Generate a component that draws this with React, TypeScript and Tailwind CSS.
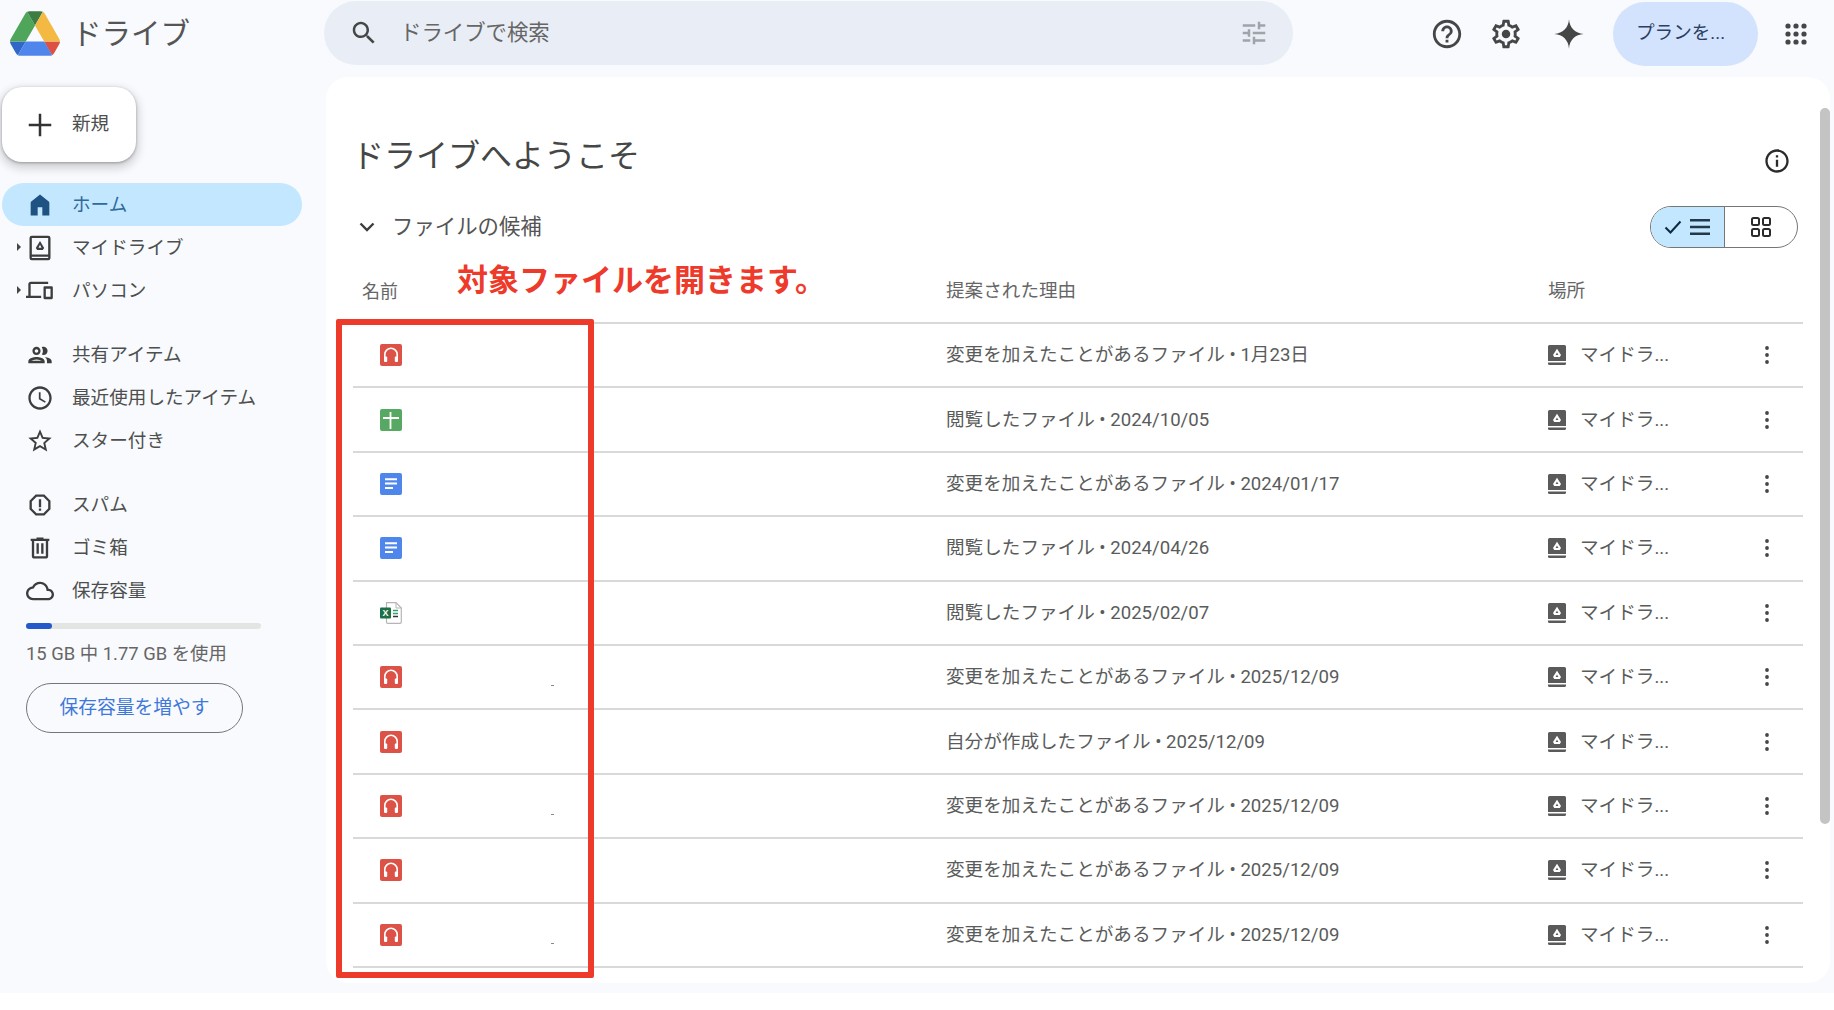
import React from "react";

type IconProps = { className?: string };

const Icon = ({ className, children }: IconProps & { children: React.ReactNode }) => (
  <svg viewBox="0 0 24 24" className={className} fill="currentColor">
    {children}
  </svg>
);

const DriveLogo = () => (
  <svg viewBox="0 0 87.3 78" className="h-[45px] w-[50px]">
    <path d="m6.6 66.85 3.85 6.65c.8 1.4 1.95 2.5 3.3 3.3l13.75-23.8h-27.5c0 1.55.4 3.1 1.2 4.5z" fill="#2f68c8" />
    <path d="m43.65 25-13.75-23.8c-1.35.8-2.5 1.9-3.3 3.3l-25.4 44a9.06 9.06 0 0 0 -1.2 4.5h27.5z" fill="#4fa65a" />
    <path d="m73.55 76.8c1.35-.8 2.5-1.9 3.3-3.3l1.6-2.75 7.65-13.25c.8-1.4 1.2-2.95 1.2-4.5h-27.502l5.852 11.5z" fill="#dc5143" />
    <path d="m43.65 25 13.75-23.8c-1.35-.8-2.9-1.2-4.5-1.2h-18.5c-1.6 0-3.15.45-4.5 1.2z" fill="#3d7d43" />
    <path d="m59.8 53h-32.3l-13.75 23.8c1.35.8 2.9 1.2 4.5 1.2h50.8c1.6 0 3.15-.45 4.5-1.2z" fill="#4e86ec" />
    <path d="m73.4 26.5-12.7-22c-.8-1.4-1.95-2.5-3.3-3.3l-13.75 23.8 16.15 28h27.45c0-1.55-.4-3.1-1.2-4.5z" fill="#f4b942" />
  </svg>
);

const SearchIcon = ({ className }: IconProps) => (
  <Icon className={className}>
    <path d="M15.5 14h-.79l-.28-.27C15.41 12.59 16 11.11 16 9.5 16 5.91 13.09 3 9.5 3S3 5.91 3 9.5 5.91 16 9.5 16c1.61 0 3.09-.59 4.23-1.57l.27.28v.79l5 4.99L20.49 19l-4.99-5zm-6 0C7.01 14 5 11.99 5 9.5S7.01 5 9.5 5 14 7.01 14 9.5 11.99 14 9.5 14z" />
  </Icon>
);

const TuneIcon = ({ className }: IconProps) => (
  <Icon className={className}>
    <path d="M3 17v2h6v-2H3zM3 5v2h10V5H3zm10 16v-2h8v-2h-8v-2h-2v6h2zM7 9v2H3v2h4v2h2V9H7zm14 4v-2H11v2h10zm-6-4h2V7h4V5h-4V3h-2v6z" />
  </Icon>
);

const HelpIcon = ({ className }: IconProps) => (
  <Icon className={className}>
    <path d="M11 18h2v-2h-2v2zm1-16C6.48 2 2 6.48 2 12s4.48 10 10 10 10-4.48 10-10S17.52 2 12 2zm0 18c-4.41 0-8-3.59-8-8s3.59-8 8-8 8 3.59 8 8-3.59 8-8 8zm0-14c-2.21 0-4 1.79-4 4h2c0-1.1.9-2 2-2s2 .9 2 2c0 2-3 1.75-3 5h2c0-2.25 3-2.5 3-5 0-2.21-1.79-4-4-4z" />
  </Icon>
);

const GearIcon = ({ className }: IconProps) => (
  <Icon className={className}>
    <path d="M19.43 12.98c.04-.32.07-.64.07-.98 0-.34-.03-.66-.07-.98l2.11-1.65c.19-.15.24-.42.12-.64l-2-3.46c-.09-.16-.26-.25-.44-.25-.06 0-.12.01-.17.03l-2.49 1c-.52-.4-1.08-.73-1.69-.98l-.38-2.65C14.46 2.18 14.25 2 14 2h-4c-.25 0-.46.18-.49.42l-.38 2.65c-.61.25-1.17.59-1.69.98l-2.49-1c-.06-.02-.12-.03-.18-.03-.17 0-.34.09-.43.25l-2 3.46c-.13.22-.07.49.12.64l2.11 1.65c-.04.32-.07.65-.07.98 0 .33.03.66.07.98l-2.11 1.65c-.19.15-.24.42-.12.64l2 3.46c.09.16.26.25.44.25.06 0 .12-.01.17-.03l2.49-1c.52.4 1.08.73 1.69.98l.38 2.65c.03.24.24.42.49.42h4c.25 0 .46-.18.49-.42l.38-2.65c.61-.25 1.17-.59 1.69-.98l2.49 1c.06.02.12.03.18.03.17 0 .34-.09.43-.25l2-3.46c.12-.22.07-.49-.12-.64l-2.11-1.65zm-1.98-1.71c.04.31.05.52.05.73 0 .21-.02.43-.05.73l-.14 1.13.89.7 1.08.84-.7 1.21-1.27-.51-1.04-.42-.9.68c-.43.32-.84.56-1.25.73l-1.06.43-.16 1.13-.2 1.35h-1.4l-.19-1.35-.16-1.13-1.06-.43c-.43-.18-.83-.41-1.23-.71l-.91-.7-1.06.43-1.27.51-.7-1.21 1.08-.84.89-.7-.14-1.13c-.03-.31-.05-.54-.05-.74s.02-.43.05-.73l.14-1.13-.89-.7-1.08-.84.7-1.21 1.27.51 1.04.42.9-.68c.43-.32.84-.56 1.25-.73l1.06-.43.16-1.13.2-1.35h1.39l.19 1.35.16 1.13 1.06.43c.43.18.83.41 1.23.71l.91.7 1.06-.43 1.27-.51.7 1.21-1.07.85-.89.7.14 1.13z" />
    <circle cx="12" cy="12" r="3" />
  </Icon>
);

const SparkIcon = ({ className }: IconProps) => (
  <Icon className={className}>
    <path d="M12 1C12.4 7.400 16.600 11.600 23 12 16.600 12.400 12.400 16.600 12 23 11.600 16.600 7.400 12.400 1 12 7.400 11.600 11.600 7.400 12 1Z" />
  </Icon>
);

const AppsIcon = ({ className }: IconProps) => (
  <Icon className={className}>
    {[4, 12, 20].map((y) =>
      [4, 12, 20].map((x) => <circle key={`${x}-${y}`} cx={x} cy={y} r="2.6" />)
    )}
  </Icon>
);

const InfoIcon = ({ className }: IconProps) => (
  <Icon className={className}>
    <path d="M11 7h2v2h-2zm0 4h2v6h-2zm1-9C6.48 2 2 6.48 2 12s4.48 10 10 10 10-4.48 10-10S17.52 2 12 2zm0 18c-4.41 0-8-3.59-8-8s3.59-8 8-8 8 3.59 8 8-3.59 8-8 8z" />
  </Icon>
);

const HomeIcon = ({ className }: IconProps) => (
  <Icon className={className}>
    <path d="M4 21V10c0-.4.2-.8.5-1L12 3l7.5 6c.3.2.5.6.5 1v11h-6v-7h-4v7z" />
  </Icon>
);

const MyDriveIcon = ({ className }: IconProps) => (
  <Icon className={className}>
    <path d="M5 1.500h14a2 2 0 0 1 2 2v17a2 2 0 0 1-2 2H5a2 2 0 0 1-2-2v-17a2 2 0 0 1 2-2zm0 2v14h14V3.500zm0 16v1h14v-1z" fillRule="evenodd" />
    <path d="M12 6l3.600 6-1.200 1.800H9.600L8.400 12zM12 9.300l-1.300 2.500h2.600z" fillRule="evenodd" />
  </Icon>
);

const ComputerIcon = ({ className }: IconProps) => (
  <Icon className={className}>
    <path d="M4 6v10h9v2H0v-2h2V6c0-1.100.9-2 2-2h15v2z" />
    <path d="M16 8h6a1 1 0 0 1 1 1v9a1 1 0 0 1-1 1h-6a1 1 0 0 1-1-1V9a1 1 0 0 1 1-1zm1 2v7h4v-7z" fillRule="evenodd" />
  </Icon>
);

const PeopleIcon = ({ className }: IconProps) => (
  <Icon className={className}>
    <path d="M9 13.750c-2.340 0-7 1.170-7 3.500V19h14v-1.750c0-2.330-4.660-3.500-7-3.500zM4.340 17c.840-.580 2.870-1.250 4.660-1.250s3.820.670 4.660 1.250H4.340zM9 12c1.930 0 3.500-1.570 3.500-3.500S10.930 5 9 5 5.500 6.570 5.500 8.500 7.070 12 9 12zm0-5c.830 0 1.500.670 1.500 1.500S9.830 10 9 10s-1.500-.670-1.500-1.500S8.170 7 9 7zm7.040 6.810c1.160.840 1.960 1.960 1.960 3.440V19h4v-1.750c0-2.020-3.500-3.170-5.960-3.440zM15 12c1.930 0 3.500-1.570 3.500-3.500S16.930 5 15 5c-.540 0-1.040.130-1.500.350.630.890 1 1.980 1 3.150s-.370 2.260-1 3.150c.460.220.960.350 1.500.350z" />
  </Icon>
);

const ClockIcon = ({ className }: IconProps) => (
  <Icon className={className}>
    <path d="M11.990 2C6.470 2 2 6.480 2 12s4.470 10 9.990 10C17.520 22 22 17.520 22 12S17.520 2 11.990 2zM12 20c-4.420 0-8-3.580-8-8s3.580-8 8-8 8 3.580 8 8-3.580 8-8 8zm.5-13H11v6l5.250 3.150.750-1.230-4.500-2.670z" />
  </Icon>
);

const StarIcon = ({ className }: IconProps) => (
  <Icon className={className}>
    <path d="M22 9.240l-7.190-.620L12 2 9.190 8.630 2 9.240l5.460 4.730L5.820 21 12 17.270 18.180 21l-1.630-7.030L22 9.240zM12 15.400l-3.760 2.270 1-4.280-3.320-2.880 4.380-.380L12 6.100l1.710 4.040 4.380.380-3.320 2.880 1 4.280L12 15.400z" />
  </Icon>
);

const SpamIcon = ({ className }: IconProps) => (
  <Icon className={className}>
    <path d="M15.730 3H8.270L3 8.270v7.460L8.270 21h7.460L21 15.730V8.270L15.730 3zM19 14.900 14.900 19H9.100L5 14.900V9.100L9.100 5h5.800L19 9.100v5.800z" />
    <path d="M11 7h2v7h-2zm0 8h2v2h-2z" />
  </Icon>
);

const TrashIcon = ({ className }: IconProps) => (
  <Icon className={className}>
    <path d="M15 4V3H9v1H4v2h1v13c0 1.100.9 2 2 2h10c1.100 0 2-.9 2-2V6h1V4h-5zm2 15H7V6h10v13zM9 8h2v9H9zm4 0h2v9h-2z" />
  </Icon>
);

const CloudIcon = ({ className }: IconProps) => (
  <Icon className={className}>
    <path d="M19.350 10.040C18.670 6.590 15.640 4 12 4 9.110 4 6.600 5.640 5.350 8.040 2.340 8.360 0 10.910 0 14c0 3.310 2.690 6 6 6h13c2.760 0 5-2.240 5-5 0-2.640-2.050-4.780-4.650-4.960zM19 18H6c-2.210 0-4-1.790-4-4 0-2.050 1.530-3.760 3.560-3.970l1.070-.110.5-.950C8.080 7.140 9.940 6 12 6c2.620 0 4.880 1.860 5.390 4.430l.3 1.500 1.530.110c1.560.1 2.780 1.410 2.780 2.960 0 1.650-1.350 3-3 3z" />
  </Icon>
);

const AudioFile = () => (
  <svg viewBox="0 0 22 22" className="h-[22px] w-[22px]">
    <rect width="22" height="22" rx="2" fill="#dc5246" />
    <path d="M4.800 16v-5.500a6.200 6.200 0 0 1 12.400 0V16" fill="none" stroke="#fff" strokeWidth="1.600" />
    <rect x="4" y="12.500" width="3.200" height="5.500" rx="1" fill="#fff" />
    <rect x="14.800" y="12.500" width="3.200" height="5.500" rx="1" fill="#fff" />
  </svg>
);

const SheetFile = () => (
  <svg viewBox="0 0 22 22" className="h-[22px] w-[22px]">
    <rect width="22" height="22" rx="2" fill="#57a862" />
    <path d="M3 9h16M10.500 3V20" stroke="#fff" strokeWidth="1.800" />
  </svg>
);

const DocFile = () => (
  <svg viewBox="0 0 22 22" className="h-[22px] w-[22px]">
    <rect width="22" height="22" rx="2" fill="#4f86ec" />
    <path d="M5 6.200h12M5 10.600h12M5 15h8" stroke="#fff" strokeWidth="2" />
  </svg>
);

const ExcelFile = () => (
  <svg viewBox="0 0 22 22" className="h-[22px] w-[22px]">
    <path d="M6.500.7h9.500l5.300 5.300v14a1.300 1.300 0 0 1-1.300 1.300H7.800A1.300 1.300 0 0 1 6.500 20z" fill="#fff" stroke="#b5b5b5" strokeWidth="1.200" />
    <path d="M16 .7V6h5.300" fill="none" stroke="#b5b5b5" strokeWidth="1" />
    <rect y="5.500" width="11" height="11" rx="1" fill="#1f7145" />
    <text x="5.500" y="14" textAnchor="middle" fontSize="9" fontWeight="700" fill="#fff" fontFamily="Liberation Sans">X</text>
    <path d="M13 8.500h5" stroke="#2fa36b" strokeWidth="1.500" />
    <path d="M13 11.500h5" stroke="#2fa36b" strokeWidth="1.500" />
    <path d="M13 14.500h5" stroke="#333" strokeWidth="1.500" />
  </svg>
);

const LocationIcon = () => (
  <svg viewBox="0 0 18 20" className="h-[20px] w-[18px]">
    <path d="M1.500 0h15A1.500 1.500 0 0 1 18 1.500V16H0V1.500A1.500 1.500 0 0 1 1.500 0z" fill="#5a5a5a" />
    <path d="M0 17.600h18V18.500a1.500 1.500 0 0 1-1.500 1.500h-15A1.500 1.500 0 0 1 0 18.500z" fill="#5a5a5a" />
    <path d="M9 3.800l4 6.200-1.200 1.900H6.200L5 10z" fill="#fff" />
    <path d="M9 7.500l-1.400 2.500h2.800z" fill="#5a5a5a" />
  </svg>
);

const MoreIcon = () => (
  <svg viewBox="0 0 4 18" className="h-[18px] w-[4px]" fill="#444746">
    <circle cx="2" cy="2" r="1.900" />
    <circle cx="2" cy="9" r="1.900" />
    <circle cx="2" cy="16" r="1.900" />
  </svg>
);

const Caret = () => (
  <svg viewBox="0 0 4 8" className="h-[8px] w-[4px]" fill="#444746">
    <path d="M0 0l4 4-4 4z" />
  </svg>
);

const NavItem = ({
  icon,
  label,
  caret,
  active,
}: {
  icon: React.ReactNode;
  label: string;
  caret?: boolean;
  active?: boolean;
}) => (
  <div
    className={
      active
        ? "ml-[2px] flex h-[43px] w-[300px] items-center rounded-full bg-[#c2e7ff] text-[#2f6a99]"
        : "ml-[2px] flex h-[43px] w-[300px] items-center text-[#4d4f4e]"
    }
  >
    <div className="flex w-[24px] justify-end pr-[5px] pb-[1px]">{caret && <Caret />}</div>
    <div className={active ? "w-[28px] text-[#1d5282]" : "w-[28px] text-[#3c3e3d]"}>{icon}</div>
    <span className="ml-[18px] mt-[2px] text-[18.6px]">{label}</span>
  </div>
);

const CHANGED = "変更を加えたことがあるファイル";
const VIEWED = "閲覧したファイル";

const rows = [
  { file: <AudioFile />, reason: `${CHANGED} • 1月23日` },
  { file: <SheetFile />, reason: `${VIEWED} • 2024/10/05` },
  { file: <DocFile />, reason: `${CHANGED} • 2024/01/17` },
  { file: <DocFile />, reason: `${VIEWED} • 2024/04/26` },
  { file: <ExcelFile />, reason: `${VIEWED} • 2025/02/07` },
  { file: <AudioFile />, reason: `${CHANGED} • 2025/12/09`, speck: true },
  { file: <AudioFile />, reason: `自分が作成したファイル • 2025/12/09` },
  { file: <AudioFile />, reason: `${CHANGED} • 2025/12/09`, speck: true },
  { file: <AudioFile />, reason: `${CHANGED} • 2025/12/09` },
  { file: <AudioFile />, reason: `${CHANGED} • 2025/12/09`, speck: true },
];

const Row = ({ file, reason, speck }: { file: React.ReactNode; reason: string; speck?: boolean }) => (
  <div className="grid h-[64.4px] grid-cols-[594px_602px_1fr_52px] items-center border-b-2 border-[#d9d9d9] text-[18.6px] text-[#5a5c5b]">
    <div className="relative pl-[27px]">
      {file}
      {speck && <span className="absolute left-[198px] top-[19px] h-px w-[3px] bg-[#888]" />}
    </div>
    <span className="-ml-px mt-[2px] whitespace-nowrap">{reason}</span>
    <div className="-ml-px flex items-center gap-[14px]">
      <LocationIcon />
      <span className="mt-[2px]">マイドラ...</span>
    </div>
    <div className="flex justify-start pl-[14px]">
      <MoreIcon />
    </div>
  </div>
);

export default function App() {
  return (
    <div className="h-[1010px] w-[1834px] overflow-hidden bg-white font-['Roboto','Noto_Sans_CJK_JP',sans-serif]">
      <div className="h-[993px] bg-[#f8fafd]">
        {/* header */}
        <header className="flex h-[77px] items-start pt-px">
          <div className="flex h-[65px] w-[324px] items-center pl-[10px]">
            <DriveLogo />
            <span className="ml-[12px] mt-px text-[29.5px] text-[#555]">ドライブ</span>
          </div>
          <div className="flex h-[64px] w-[969px] items-center rounded-full bg-[#e9eef6] pl-[25px] pr-[24px]">
            <SearchIcon className="h-[30px] w-[30px] text-[#444746]" />
            <span className="ml-[21px] mt-px flex-1 text-[21.4px] text-[#666]">ドライブで検索</span>
            <TuneIcon className="h-[30px] w-[30px] text-[#a0a3a8]" />
          </div>
          <div className="flex h-[65px] flex-1 items-center">
            <HelpIcon className="ml-[137px] h-[34px] w-[34px] text-[#444746]" />
            <GearIcon className="ml-[25px] h-[34px] w-[34px] text-[#444746]" />
            <SparkIcon className="ml-[30px] h-[32px] w-[32px] text-[#444746]" />
            <div className="ml-[28px] flex h-[64px] w-[145px] items-center justify-center rounded-full bg-[#d3e3fd] pr-[10px] text-[18.6px] text-[#2b3f63]">
              プランを...
            </div>
            <AppsIcon className="ml-[26px] h-[24px] w-[24px] text-[#444746]" />
          </div>
        </header>

        <div className="flex">
          {/* sidebar */}
          <aside className="w-[326px] pt-[10px]">
            <div className="ml-[2px] flex h-[75px] w-[134px] items-center rounded-[20px] bg-white pl-[23px] shadow-[0_1px_3px_rgba(0,0,0,0.3),0_4px_8px_3px_rgba(0,0,0,0.15)]">
              <svg viewBox="0 0 24 24" className="h-[30px] w-[30px] text-[#333]" fill="currentColor">
                <path d="M11 3h2v8h8v2h-8v8h-2v-8H3v-2h8z" />
              </svg>
              <span className="ml-[17px] mt-[1px] text-[18.6px] text-[#4d4f4e]">新規</span>
            </div>
            <div className="mt-[21px]">
              <NavItem active icon={<HomeIcon className="h-[28px] w-[28px]" />} label="ホーム" />
              <NavItem caret icon={<MyDriveIcon className="h-[28px] w-[28px]" />} label="マイドライブ" />
              <NavItem caret icon={<ComputerIcon className="h-[28px] w-[28px]" />} label="パソコン" />
            </div>
            <div className="mt-[21px]">
              <NavItem icon={<PeopleIcon className="h-[28px] w-[28px]" />} label="共有アイテム" />
              <NavItem icon={<ClockIcon className="h-[28px] w-[28px]" />} label="最近使用したアイテム" />
              <NavItem icon={<StarIcon className="h-[28px] w-[28px]" />} label="スター付き" />
            </div>
            <div className="mt-[21px]">
              <NavItem icon={<SpamIcon className="h-[28px] w-[28px]" />} label="スパム" />
              <NavItem icon={<TrashIcon className="h-[28px] w-[28px]" />} label="ゴミ箱" />
              <NavItem icon={<CloudIcon className="h-[28px] w-[28px]" />} label="保存容量" />
            </div>
            <div className="ml-[26px] mt-[11px] h-[6px] w-[235px] rounded-full bg-[#e3e5e2]">
              <div className="h-[6px] w-[26px] rounded-full bg-[#2459c9]" />
            </div>
            <div className="ml-[26px] mt-[12px] text-[18.4px] leading-[26px] text-[#666]">15 GB 中 1.77 GB を使用</div>
            <div className="ml-[26px] mt-[16px] flex h-[50px] w-[217px] items-center justify-center rounded-full border border-[#747775] pt-px text-[18.8px] text-[#3f78db]">
              保存容量を増やす
            </div>
          </aside>

          {/* main card */}
          <main className="relative h-[906px] w-[1504px] overflow-hidden rounded-[22px] bg-white pl-[27px] pr-[27px] pt-[57px]">
            <div className="flex h-[44px] items-center justify-between">
              <h1 className="-ml-px text-[32px] text-[#444746]">ドライブへようこそ</h1>
              <InfoIcon className="mr-[12px] mt-[10px] h-[28px] w-[28px] text-[#2a2c2b]" />
            </div>
            <div className="mt-[28px] flex h-[42px] items-center justify-between">
              <div className="flex items-center">
                <svg viewBox="0 0 16 10" className="ml-[6px] h-[10px] w-[16px]" fill="none" stroke="#3c3e3d" strokeWidth="2.400">
                  <path d="M1.500 1.500 8 8l6.500-6.500" />
                </svg>
                <span className="ml-[17px] text-[21.4px] text-[#555]">ファイルの候補</span>
              </div>
              <div className="mr-[5px] flex h-[42px] w-[148px] overflow-hidden rounded-full border border-[#747775]">
                <div className="flex w-[74px] items-center justify-center gap-[8px] border-r border-[#747775] bg-[#c2e7ff] pr-[2px]">
                  <svg viewBox="0 0 18 14" className="h-[14px] w-[18px]" fill="none" stroke="#0f2a3f" strokeWidth="2">
                    <path d="M1.500 7.500 6.500 12.500 16.500 1.500" />
                  </svg>
                  <svg viewBox="0 0 20 16" className="h-[16px] w-[20px]" fill="#23384a">
                    <path d="M0 0h20v2.600H0zM0 6.700h20v2.600H0zM0 13.400h20V16H0z" />
                  </svg>
                </div>
                <div className="flex flex-1 items-center justify-center">
                  <svg viewBox="0 0 20 20" className="h-[20px] w-[20px]" fill="none" stroke="#2a2c2b" strokeWidth="2">
                    <rect x="1" y="1" width="7" height="7" rx="1.500" />
                    <rect x="12" y="1" width="7" height="7" rx="1.500" />
                    <rect x="1" y="12" width="7" height="7" rx="1.500" />
                    <rect x="12" y="12" width="7" height="7" rx="1.500" />
                  </svg>
                </div>
              </div>
            </div>
            <div className="mt-[12px] grid h-[64px] grid-cols-[594px_602px_1fr] items-center border-b-2 border-[#d9d9d9] text-[18.6px] text-[#666]">
              <span className="pl-[9px] text-[18px]">名前</span>
              <span className="-ml-px mt-[2px]">提案された理由</span>
              <span className="-ml-px mt-[2px]">場所</span>
            </div>
            {rows.map((row, i) => (
              <Row key={i} {...row} />
            ))}

            {/* annotation over the table */}
            <span className="absolute left-[131px] top-[181px] whitespace-nowrap text-[31px] font-bold text-[#ee3a2b]">
              対象ファイルを開きます。
            </span>
            <div className="absolute left-[10px] top-[242px] h-[659px] w-[258px] rounded-[2px] border-[6px] border-[#ee3a2b]" />

            {/* scrollbar */}
            <div className="absolute right-0 top-[31px] h-[716px] w-[10px] rounded-full bg-[#c4c4c4]" />
          </main>
        </div>
      </div>
    </div>
  );
}
